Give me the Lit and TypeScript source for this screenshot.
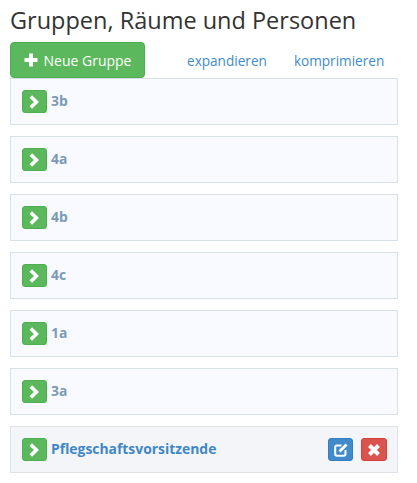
import { css, html, LitElement } from "lit";
import { customElement } from "lit/decorators.js";

const groups = ["3b", "4a", "4b", "4c", "1a", "3a"];

const chevron = html`<svg viewBox="0 0 13 14" width="13" height="14">
  <path d="M2.8 1.4 L8.4 7 L2.8 12.6" fill="none" stroke="#fff" stroke-width="3.6" />
</svg>`;

@customElement("app-root")
export class AppRoot extends LitElement {
  static styles = css`
    :host {
      display: block;
      width: 417px;
      height: 483px;
      overflow: hidden;
      background: #fff;
      font-family: "Open Sans", "Noto Sans", sans-serif;
      color: #333;
    }
    .page {
      padding: 4px 19px 0 10px;
    }
    h1 {
      margin: 0;
      font-size: 23.5px;
      font-weight: 400;
      line-height: 32px;
      height: 38px;
      white-space: nowrap;
      color: #333;
    }
    .toolbar {
      display: flex;
      align-items: center;
      height: 36px;
    }
    .add {
      display: flex;
      align-items: center;
      justify-content: center;
      gap: 6px;
      width: 135px;
      height: 36px;
      box-sizing: border-box;
      background: #5cb85c;
      border: 1px solid #4cae4c;
      border-radius: 4px;
      color: #fff;
      font-size: 14px;
    }
    .links {
      display: flex;
      margin-left: 42px;
      gap: 27px;
      font-size: 13.6px;
      color: #428bca;
    }
    .row {
      display: flex;
      align-items: center;
      box-sizing: border-box;
      height: 47px;
      margin-bottom: 11px;
      padding: 0 10px 0 11px;
      background: #f8faff;
      border: 1px solid #d8e0e8;
      font-size: 13.9px;
      font-weight: 700;
      color: #7b9ab8;
    }
    .row.active {
      background: #f4f5f8;
      border-color: #e0e2e8;
      color: #3f88c5;
    }
    .toggle,
    .action {
      display: flex;
      align-items: center;
      justify-content: center;
      box-sizing: border-box;
      width: 25px;
      height: 23px;
      border-radius: 3px;
      flex: none;
    }
    .toggle {
      background: #5cb85c;
      border: 1px solid #4cae4c;
      margin-right: 4px;
    }
    .name {
      flex: 1;
      position: relative;
      top: -1px;
    }
    .actions {
      display: flex;
      gap: 8px;
    }
    .action.edit {
      background: #428bca;
      border: 1px solid #357ebd;
    }
    .action.remove {
      width: 26px;
      background: #d9534f;
      border: 1px solid #d43f3a;
    }
  `;

  render() {
    return html`
      <div class="page">
        <h1>Gruppen, Räume und Personen</h1>
        <div class="toolbar">
          <div class="add">
            <svg viewBox="0 0 14 14" width="14" height="14">
              <path d="M7 0.5 V13.5 M0.5 7 H13.5" stroke="#fff" stroke-width="4" fill="none" />
            </svg>
            Neue Gruppe
          </div>
          <div class="links"><span>expandieren</span><span>komprimieren</span></div>
        </div>
        ${groups.map(
          (g) => html`
            <div class="row">
              <span class="toggle">${chevron}</span>
              <span class="name">${g}</span>
            </div>
          `,
        )}
        <div class="row active">
          <span class="toggle">${chevron}</span>
          <span class="name">Pflegschaftsvorsitzende</span>
          <div class="actions">
            <span class="action edit">
              <svg viewBox="0 0 16 16" width="16" height="16" fill="none" stroke="#fff">
                <path d="M8.5 3.5 H4 A1.8 1.8 0 0 0 2.2 5.3 V12 A1.8 1.8 0 0 0 4 13.8 H10.7 A1.8 1.8 0 0 0 12.5 12 V8" stroke-width="2" />
                <path d="M6.5 9.6 L13.6 2.4" stroke-width="2.8" />
              </svg>
            </span>
            <span class="action remove">
              <svg viewBox="0 0 14 14" width="14" height="14">
                <path d="M2.5 2.5 L11.5 11.5 M11.5 2.5 L2.5 11.5" stroke="#fff" stroke-width="4" fill="none" />
              </svg>
            </span>
          </div>
        </div>
      </div>
    `;
  }
}
